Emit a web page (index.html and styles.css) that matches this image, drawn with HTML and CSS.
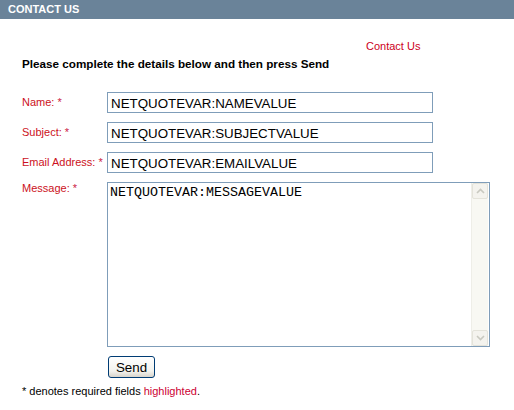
FILE: index.html
```html
<!DOCTYPE html>
<html>
<head>
<meta charset="utf-8">
<link rel="stylesheet" href="styles.css">
</head>
<body>
<div class="header">CONTACT US</div>
<div class="content">
  <div class="toplink"><a href="#">Contact Us</a></div>
  <div class="intro">Please complete the details below and then press Send</div>
  <form class="form">
    <label class="lbl">Name: <span class="req">*</span></label>
    <div class="field"><input class="txt" type="text" value="NETQUOTEVAR:NAMEVALUE"></div>
    <label class="lbl">Subject: <span class="req">*</span></label>
    <div class="field"><input class="txt" type="text" value="NETQUOTEVAR:SUBJECTVALUE"></div>
    <label class="lbl">Email Address: <span class="req">*</span></label>
    <div class="field"><input class="txt" type="text" value="NETQUOTEVAR:EMAILVALUE"></div>
    <label class="lbl lbl-top">Message: <span class="req">*</span></label>
    <div class="field">
      <div class="areabox">
        <textarea class="area">NETQUOTEVAR:MESSAGEVALUE</textarea>
        <div class="sbar">
          <div class="sbtn"><svg width="9" height="6" viewBox="0 0 9 6"><path d="M1 5 L4.5 1.5 L8 5" fill="none" stroke="#c9c9c0" stroke-width="1.6"/></svg></div>
          <div class="strack"></div>
          <div class="sbtn"><svg width="9" height="6" viewBox="0 0 9 6"><path d="M1 1 L4.5 4.5 L8 1" fill="none" stroke="#c9c9c0" stroke-width="1.6"/></svg></div>
        </div>
      </div>
    </div>
    <div></div>
    <div class="field"><button type="button" class="send">Send</button></div>
  </form>
  <div class="note">* denotes required fields <span class="hl">highlighted</span>.</div>
</div>
</body>
</html>
```
FILE: styles.css
```css
html, body {
  margin: 0;
  padding: 0;
  background: #fff;
  font-family: "Liberation Sans", Arial, sans-serif;
  font-size: 11px;
  color: #000;
}
.header {
  height: 19px;
  line-height: 19px;
  background: #6a8399;
  color: #fff;
  font-weight: bold;
  font-size: 11px;
  padding-left: 8px;
}
.content {
  padding-left: 22px;
}
.toplink {
  margin-top: 21px;
  padding-left: 344px;
  line-height: 13px;
  height: 13px;
}
.toplink a {
  color: #cc0022;
  text-decoration: none;
}
.intro {
  margin-top: 4px;
  line-height: 13px;
  font-size: 11.7px;
  font-weight: bold;
}
.form {
  margin: 22px 0 0 0;
  display: grid;
  grid-template-columns: 85px 1fr;
  row-gap: 9px;
  align-items: center;
}
.lbl {
  color: #cc1122;
  line-height: 13px;
}
.lbl-top {
  align-self: start;
  padding-top: 0px;
}
.req {
  color: #cc2244;
}
.txt {
  box-sizing: border-box;
  width: 326px;
  height: 21px;
  margin: 0;
  border: 1px solid #7f9db9;
  padding: 1px 3px 0 3px;
  font-family: "Liberation Sans", Arial, sans-serif;
  font-size: 13.33px;
  color: #000;
  background: #fff;
  outline: none;
}
.areabox {
  box-sizing: border-box;
  width: 383px;
  height: 165px;
  border: 1px solid #7f9db9;
  display: flex;
  background: #fff;
}
.area {
  flex: 1;
  border: none;
  outline: none;
  resize: none;
  margin: 0;
  padding: 2px 2px;
  font-family: "Liberation Mono", "Courier New", monospace;
  font-size: 13.33px;
  line-height: 15px;
  color: #000;
  overflow: hidden;
  background: #fff;
}
.sbar {
  width: 16px;
  margin: 0 1px 0 0;
  display: flex;
  flex-direction: column;
  background: #f8f8f3;
  border-left: 1px solid #eeeee8;
}
.sbtn {
  box-sizing: border-box;
  height: 16px;
  border: 1px solid #e4e3da;
  border-radius: 2px;
  background: #f4f3ee;
  display: flex;
  align-items: center;
  justify-content: center;
}
.strack {
  flex: 1;
}
.send {
  box-sizing: border-box;
  width: 47px;
  height: 22px;
  margin: 0 0 0 1px;
  padding: 0;
  border: 1px solid #003c74;
  border-radius: 3px;
  background: linear-gradient(#ffffff, #f3f3ee 70%, #d8d4cb);
  font-family: "Liberation Sans", Arial, sans-serif;
  font-size: 13.33px;
  color: #000;
}
.note {
  margin-top: 7px;
  line-height: 13px;
}
.hl {
  color: #cc0033;
}
```
